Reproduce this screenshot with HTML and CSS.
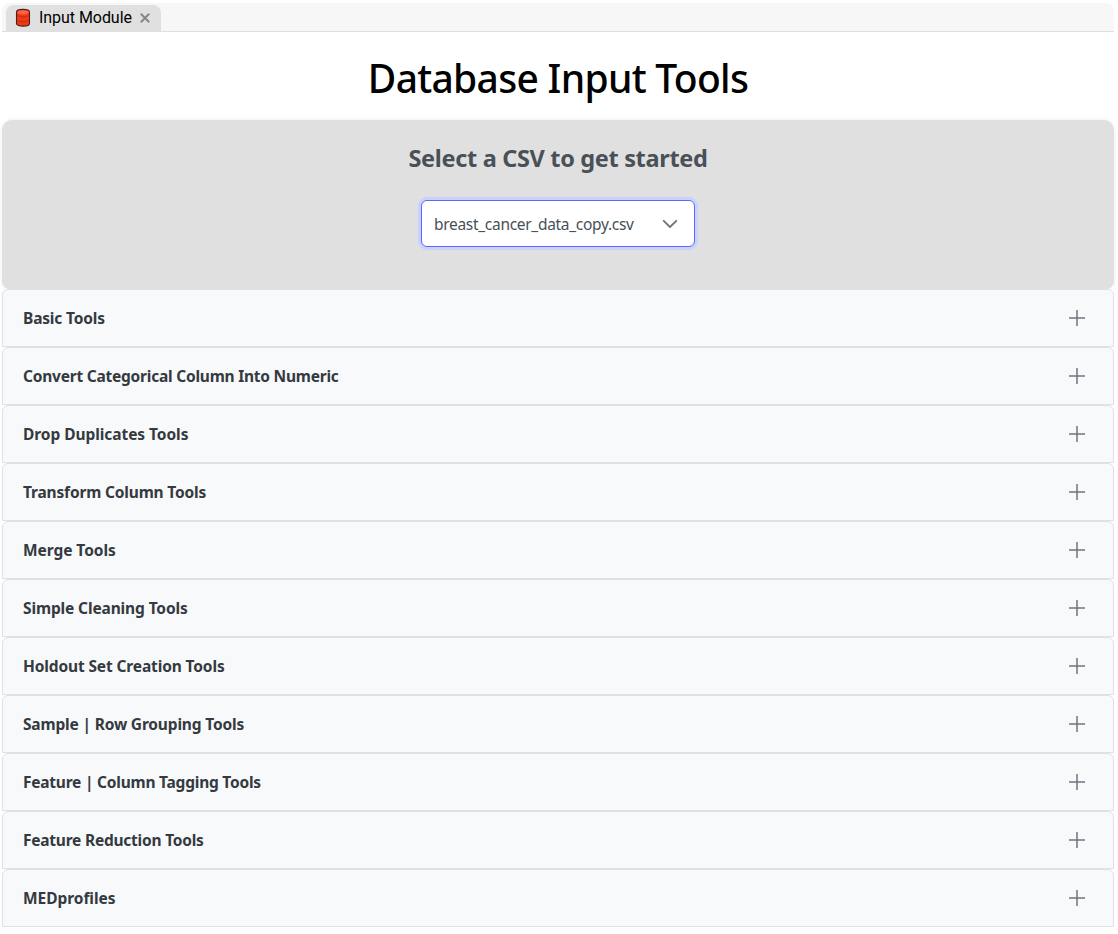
FILE: index.html
```html
<!DOCTYPE html>
<html lang="en">
<head>
<meta charset="utf-8">
<title>Input Module</title>
<link rel="stylesheet" href="styles.css">
</head>
<body>
<main class="layout">
  <nav class="tabbar">
    <div class="tab">
      <svg class="tab-icon" width="16" height="20" viewBox="0 0 16 20"><path d="M1.500 4C1.500 .5 14.500 .5 14.500 4V15.500C14.500 19 1.500 19 1.500 15.500Z" fill="#ee3a14" stroke="#4a2019" stroke-width="1.100"/><ellipse cx="8" cy="4.300" rx="5.800" ry="2.100" fill="#ff6242"/><path d="M2 7.300C4 9.500 12 9.500 14 7.300M2 12C4 14.200 12 14.200 14 12" fill="none" stroke="#b92a10" stroke-width=".8"/></svg>
      <span class="tab-label">Input Module</span>
      <svg class="tab-close" width="10" height="10" viewBox="0 0 10 10"><path d="M.8 .8L9.200 9.200M9.200 .8L.8 9.200" stroke="#868686" stroke-width="2"/></svg>
    </div>
  </nav>
  <h1 class="title">Database Input Tools</h1>
  <section class="picker">
    <h2 class="picker-title">Select a CSV to get started</h2>
    <div class="select">
      <span class="select-value">breast_cancer_data_copy.csv</span>
      <svg class="chevron" width="16" height="16" viewBox="0 0 16 16"><path d="M1.700 4.800L8 11L14.300 4.800" fill="none" stroke="#6c757d" stroke-width="1.800" stroke-linecap="round" stroke-linejoin="round"/></svg>
    </div>
  </section>
  <section class="accordion">
    <div class="row"><span class="row-label snug">Basic Tools</span><i class="plus"></i></div>
    <div class="row"><span class="row-label tight">Convert Categorical Column Into Numeric</span><i class="plus"></i></div>
    <div class="row"><span class="row-label">Drop Duplicates Tools</span><i class="plus"></i></div>
    <div class="row"><span class="row-label snug">Transform Column Tools</span><i class="plus"></i></div>
    <div class="row"><span class="row-label">Merge Tools</span><i class="plus"></i></div>
    <div class="row"><span class="row-label medium">Simple Cleaning Tools</span><i class="plus"></i></div>
    <div class="row"><span class="row-label medium">Holdout Set Creation Tools</span><i class="plus"></i></div>
    <div class="row"><span class="row-label snug">Sample | Row Grouping Tools</span><i class="plus"></i></div>
    <div class="row"><span class="row-label tight">Feature | Column Tagging Tools</span><i class="plus"></i></div>
    <div class="row"><span class="row-label tight">Feature Reduction Tools</span><i class="plus"></i></div>
    <div class="row"><span class="row-label">MEDprofiles</span><i class="plus"></i></div>
  </section>
</main>
</body>
</html>
```
FILE: styles.css
```css
* { box-sizing: border-box; }
body { margin: 0; background: #fff; font-family: "Noto Sans", "Open Sans", sans-serif; overflow: hidden; }
.layout { padding: 3px 4px 0 2px; }
.tabbar { height: 29px; padding: 2px 0 0 4px; display: flex; background: #f7f7f7; border-bottom: 1px solid #dfdfdf; border-radius: 8px 8px 0 0; }
.tab { width: 155px; height: 26px; padding-left: 9px; display: flex; align-items: center; background: #e0e0e0; border-radius: 8px 8px 0 0; }
.tab-icon { margin-right: 8px; }
.tab-label { width: 93px; font: 16px/20px Roboto, sans-serif; letter-spacing: -.05px; color: #000; white-space: nowrap; }
.tab-close { margin-left: 8px; }
.title { margin: 0; height: 88px; padding-top: 18px; font-size: 39px; line-height: 56px; font-weight: 500; letter-spacing: -.7px; text-align: center; color: #000; white-space: nowrap; }
.picker { height: 169px; padding-top: 22px; display: flex; flex-direction: column; align-items: center; background: #e0e0e0; border-radius: 10px 10px 8px 8px; box-shadow: 0 0 4px rgba(0,0,0,.08); }
.picker-title { margin: 0 0 26px; font-size: 23.5px; line-height: 32px; font-weight: 700; letter-spacing: -.33px; color: #495057; white-space: nowrap; }
.select { width: 274px; height: 47px; padding: 0 16px 0 12px; display: flex; align-items: center; justify-content: space-between; background: #fff; border: 1px solid #6366f1; border-radius: 6px; box-shadow: 0 0 0 3px #c7d2fe; }
.select-value { font-size: 15.5px; line-height: 24px; letter-spacing: -.3px; color: #495057; white-space: nowrap; }
.row { height: 58px; padding: 0 28px 0 20px; display: flex; align-items: center; justify-content: space-between; background: #f8f9fb; border: 1px solid #dee2e6; border-radius: 6px 6px 0 0; }
.row-label { font-size: 15.5px; line-height: 24px; font-weight: 700; letter-spacing: -.06px; color: #343a40; white-space: nowrap; }
.medium { letter-spacing: -.13px; }
.snug { letter-spacing: -.17px; }
.tight { letter-spacing: -.225px; }
.plus { width: 16px; height: 16px; background: linear-gradient(rgba(108,117,125,.75), rgba(108,117,125,.75)) center / 16px 2px no-repeat, linear-gradient(rgba(108,117,125,.75), rgba(108,117,125,.75)) center / 2px 16px no-repeat; }
```
